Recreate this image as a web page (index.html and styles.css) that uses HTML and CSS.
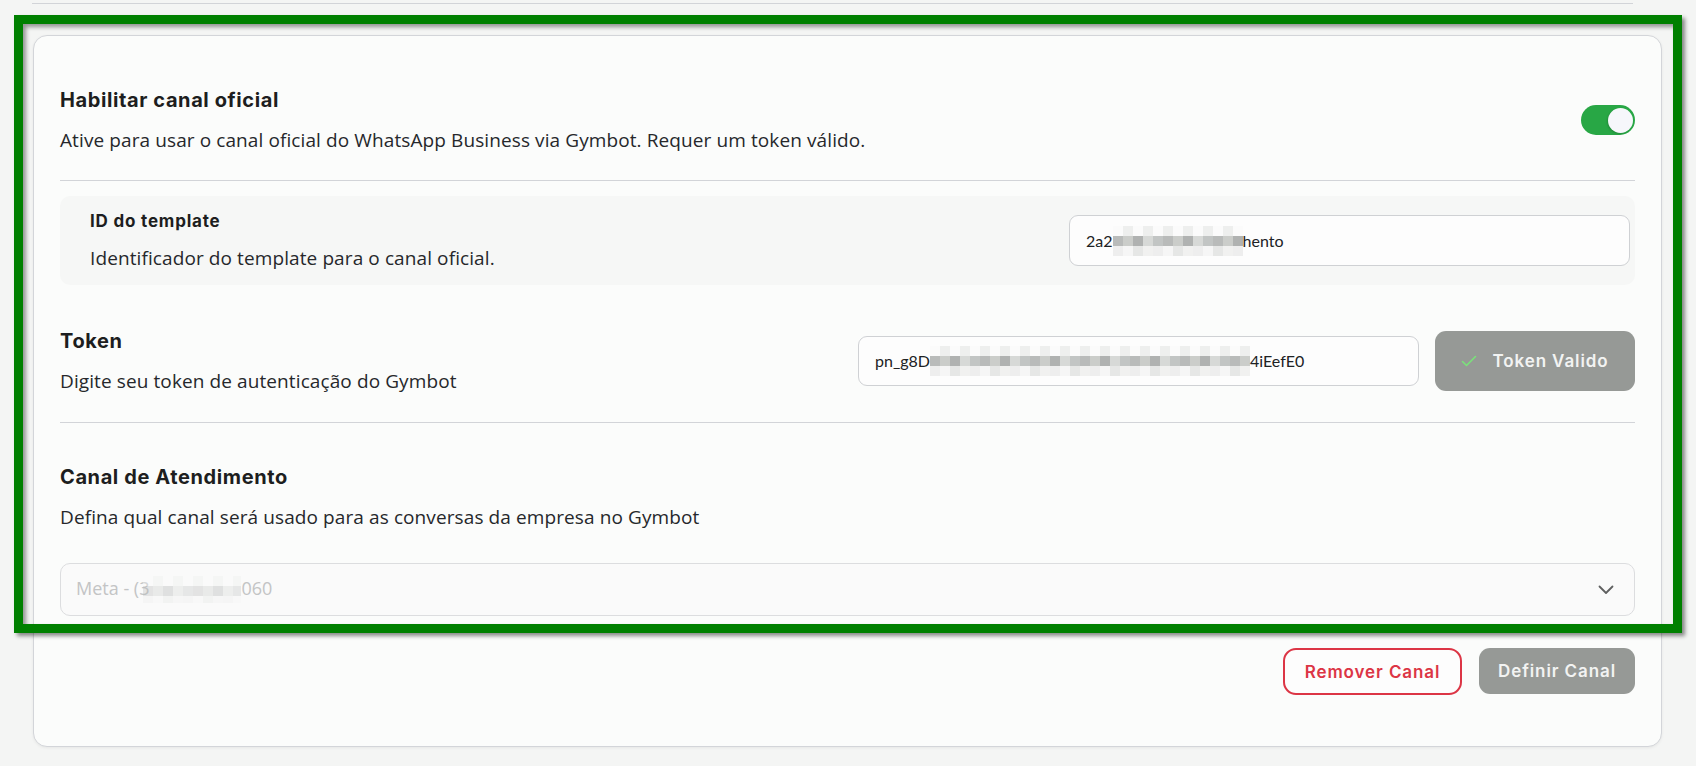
FILE: index.html
```html
<!DOCTYPE html>
<html lang="pt-BR">
<head>
	<meta charset="utf-8">
	<title>Canal oficial</title>
	<link rel="stylesheet" href="styles.css">
</head>
<body>
	<div class="top-rule"></div>

	<div class="card">
		<!-- canal oficial -->
		<section class="row row-toggle">
			<div class="text">
				<h2 class="title">Habilitar canal oficial</h2>
				<p class="desc">Ative para usar o canal oficial do WhatsApp Business via Gymbot. Requer um token válido.</p>
			</div>
			<span class="switch"><span class="knob"></span></span>
		</section>

		<hr class="divider">

		<section class="row row-template">
			<div class="text">
				<h3 class="subtitle">ID do template</h3>
				<p class="desc">Identificador do template para o canal oficial.</p>
			</div>
			<div class="field field-template">2a2<span class="blur blur-template"></span>hento</div>
		</section>

		<!-- token -->
		<section class="row row-token">
			<div class="text">
				<h2 class="title">Token</h2>
				<p class="desc">Digite seu token de autenticação do Gymbot</p>
			</div>
			<div class="token-controls">
				<div class="field field-token">pn_g8D<span class="blur blur-token"></span>4iEefE0</div>
				<button class="btn btn-valid">
					<svg class="check" width="16" height="12" viewBox="0 0 16 12"><polyline points="1.5,6.5 5.5,10.5 14.5,1.5" fill="none" stroke="#7ae27a" stroke-width="1.6" stroke-linecap="round" stroke-linejoin="round"/></svg>
					Token Valido
				</button>
			</div>
		</section>

		<hr class="divider">

		<!-- canal de atendimento -->
		<section class="channel">
			<h2 class="title">Canal de Atendimento</h2>
			<p class="desc">Defina qual canal será usado para as conversas da empresa no Gymbot</p>
			<div class="select">
				<span class="placeholder">Meta - (3<span class="blur blur-phone"></span>060</span>
				<svg class="chevron" width="16" height="10" viewBox="0 0 16 10"><polyline points="1.5,1.5 8,8 14.5,1.5" fill="none" stroke="#5f6060" stroke-width="1.8" stroke-linecap="round" stroke-linejoin="round"/></svg>
			</div>
		</section>

		<div class="actions">
			<button class="btn btn-remove">Remover Canal</button>
			<button class="btn btn-define">Definir Canal</button>
		</div>
	</div>

	<div class="highlight"></div>
</body>
</html>
```
FILE: styles.css
```css
* {
	margin: 0;
	padding: 0;
	box-sizing: border-box;
}
body {
	position: relative;
	background: #f4f5f4;
	font-family: "Open Sans", "Noto Sans", sans-serif;
	color: #202224;
	width: 1696px;
	height: 766px;
	overflow: hidden;
}
.top-rule {
	margin: 3px 0 0 32px;
	width: 1601px;
	height: 1px;
	background: #d2d4d8;
}
.card {
	margin: 31px 0 0 33px;
	width: 1629px;
	padding: 50px 26px 51px 26px;
	background: #fbfcfb;
	border: 1px solid #d3d5d9;
	border-radius: 14px;
	box-shadow: 0 1px 3px rgba(0, 0, 0, 0.06);
}
.row {
	display: flex;
	align-items: center;
	justify-content: space-between;
}
.title {
	font-family: "Inter", "Noto Sans", sans-serif;
	font-weight: 700;
	font-size: 20px;
	line-height: 28px;
	letter-spacing: 0.6px;
	color: #1d1e20;
}
.subtitle {
	font-family: "Inter", "Noto Sans", sans-serif;
	font-weight: 700;
	font-size: 17px;
	line-height: 22px;
	letter-spacing: 0.8px;
	color: #1d1e20;
}
.desc {
	margin-top: 13px;
	font-size: 19px;
	line-height: 26px;
	letter-spacing: 0.1px;
	color: #26282b;
}
.row-toggle {
	margin-bottom: 27px;
}
.switch {
	position: relative;
	display: block;
	width: 54px;
	height: 30px;
	border-radius: 15px;
	background: #28a745;
}
.knob {
	position: absolute;
	top: 3px;
	right: 2px;
	width: 25px;
	height: 25px;
	border-radius: 50%;
	background: #f6f7fb;
	box-shadow: -1px 1px 2px rgba(0, 0, 0, 0.15);
}
.divider {
	border: 0;
	height: 1px;
	background: #d2d4d8;
}
.row-template {
	margin-top: 15px;
	padding: 14px 5px 14px 30px;
	background: #f6f7f6;
	border-radius: 10px;
}
.field {
	display: flex;
	align-items: center;
	height: 51px;
	padding: 0 16px;
	background: #fdfdfd;
	border: 1px solid #cfd1d4;
	border-radius: 9px;
	font-family: "Lato", "Noto Sans", sans-serif;
	font-size: 16px;
	color: #202224;
}
.field-template {
	width: 561px;
}
.row-token {
	margin-top: 42px;
	margin-bottom: 28px;
}
.token-controls {
	display: flex;
	align-items: center;
	gap: 16px;
}
.field-token {
	width: 561px;
	height: 50px;
}
.blur {
	display: inline-block;
	height: 30px;
	background:
		repeating-linear-gradient(90deg, #eeeeee 0 10px, #f6f6f6 10px 20px, #e6e7e6 20px 30px, #f1f1f0 30px 40px) 0 20px / 100% 10px no-repeat,
		repeating-linear-gradient(90deg, #b9bbba 0 10px, #cbcdca 10px 20px, #b0b2b1 20px 30px, #d7d9d7 30px 40px, #c2c5c4 40px 50px) 0 10px / 100% 10px no-repeat,
		repeating-linear-gradient(90deg, #fbfbfb 0 10px, #eeefee 10px 20px) 0 0 / 100% 10px no-repeat;
}
.blur-template {
	width: 130px;
}
.blur-token {
	width: 320px;
}
.blur-phone {
	width: 98px;
	height: 27px;
	margin-left: -6px;
	opacity: 0.35;
	vertical-align: middle;
}
.btn {
	display: flex;
	align-items: center;
	justify-content: center;
	border: 0;
	font-family: "Inter", "Noto Sans", sans-serif;
	font-weight: 600;
	font-size: 17px;
	letter-spacing: 0.9px;
	cursor: pointer;
}
.btn-valid {
	width: 200px;
	height: 60px;
	gap: 15px;
	background: #969996;
	color: #f2f3f2;
	border-radius: 11px;
}
.channel {
	margin-top: 40px;
}
.select {
	display: flex;
	align-items: center;
	justify-content: space-between;
	margin-top: 33px;
	height: 53px;
	padding: 0 20px 0 15px;
	background: #fafafa;
	border: 1px solid #dcdddf;
	border-radius: 10px;
}
.placeholder {
	font-size: 18px;
	color: #c3c4c5;
}
.actions {
	display: flex;
	justify-content: flex-end;
	gap: 17px;
	margin-top: 32px;
}
.btn-remove {
	width: 179px;
	height: 47px;
	background: #fdfdfd;
	border: 2px solid #dc3545;
	border-radius: 13px;
	color: #dc3545;
}
.btn-define {
	width: 156px;
	height: 46px;
	background: #969996;
	border-radius: 11px;
	color: #f2f3f2;
}
.highlight {
	position: absolute;
	left: 14px;
	top: 15px;
	width: 1668px;
	height: 618px;
	border: 9px solid #008000;
	box-shadow: 3px 3px 4px rgba(0, 0, 0, 0.45), inset 3px 3px 4px rgba(0, 0, 0, 0.4);
	pointer-events: none;
}
```
